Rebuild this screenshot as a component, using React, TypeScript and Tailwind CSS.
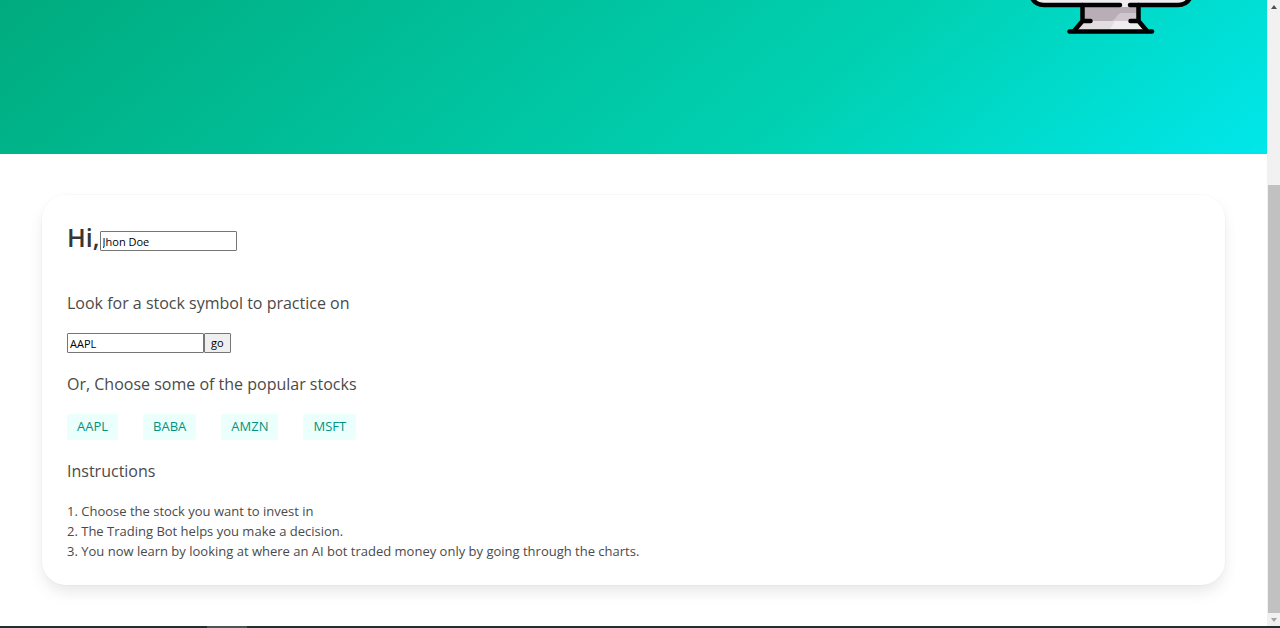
import { useState } from "react";

const stocks = ["AAPL", "BABA", "AMZN", "MSFT"];

const steps = [
  "1. Choose the stock you want to invest in",
  "2. The Trading Bot helps you make a decision.",
  "3. You now learn by looking at where an AI bot traded money only by going through the charts.",
];

function Monitor() {
  return (
    <svg className="h-[38px] w-[170px]" viewBox="0 0 170 38" fill="none" aria-hidden="true">
      <path d="M6 0c2 3 6 5 11 5h136c5 0 9-2 11-5Z" fill="#efedef" />
      <path d="M56 5h55v15l10 12H45l11-12Z" fill="#efedef" />
      <path d="M56 7h55v14H56Z" fill="#b9aeb8" />
      <path d="M56 21h33l-5 8H50Z" fill="#e2dde1" />
      <path d="M96 13h15v8H86c4-1 5-8 10-8Z" fill="#cfc6ce" />
      <g stroke="#000" strokeWidth="4.5" strokeLinecap="round" strokeLinejoin="round">
        <path d="M6-2c2 4 6 7 12 7h76" />
        <path d="M104 5h48c6 0 10-3 12-7" />
        <path d="M56.500 5v16h8M56.500 21L48 31" />
        <path d="M112.500 5v16h-8M112.500 21L121 31" />
        <path d="M43.500 31.500H126" />
      </g>
    </svg>
  );
}

function Scrollbar() {
  return (
    <div className="flex w-[13px] shrink-0 flex-col items-center bg-[#f1f1f1] pl-px" aria-hidden="true">
      <svg className="h-3.5 w-3 shrink-0" viewBox="0 0 12 14">
        <path d="M3 9l3-4 3 4Z" fill="#505050" />
      </svg>
      <div className="w-full grow-[171]" />
      <div className="w-full grow-[428] bg-[#c1c1c1]" />
      <svg className="h-[13px] w-3 shrink-0" viewBox="0 0 12 13">
        <path d="M3 5l3 4 3-4Z" fill="#a3a3a3" />
      </svg>
    </div>
  );
}

export default function App() {
  const [name, setName] = useState("Jhon Doe");
  const [symbol, setSymbol] = useState("AAPL");

  return (
    <div className="flex min-h-screen flex-col bg-white font-['Open_Sans','Noto_Sans',sans-serif] text-[#4a4a4a]">
      <div className="flex grow">
        <div className="min-w-0 grow">
          <header className="flex h-[154px] justify-end bg-linear-[141deg,#009e6c_0%,#00d1b2_71%,#00e7eb_100%] bg-[length:100%_426px] bg-bottom pr-[71px]">
            <Monitor />
          </header>
          <main className="px-[42px] py-[41px]">
            <section className="rounded-3xl px-[25px] py-6 shadow-[0_8px_16px_-2px_rgba(10,10,10,0.1),0_0_0_1px_rgba(10,10,10,0.02)]">
              <div className="flex items-end">
                <label htmlFor="name" className="text-[25px] leading-9 font-semibold text-[#363636]">
                  Hi,
                </label>
                <input
                  id="name"
                  value={name}
                  onChange={(e) => setName(e.target.value)}
                  className="mb-1 h-5 w-[137px] rounded-[1px] border border-[#767676] bg-white px-0.5 text-[11px] text-black"
                />
              </div>
              <label htmlFor="symbol" className="mt-9 block text-base leading-6">
                Look for a stock symbol to practice on
              </label>
              <form className="mt-[18px] flex" onSubmit={(e) => e.preventDefault()}>
                <input
                  id="symbol"
                  value={symbol}
                  onChange={(e) => setSymbol(e.target.value)}
                  className="h-5 w-[137px] rounded-[1px] border border-[#767676] bg-white px-0.5 text-[11px] text-black"
                />
                <button className="h-5 rounded-[1px] border border-[#767676] bg-[#efefef] px-1.5 text-[11px] leading-4 text-black">
                  go
                </button>
              </form>
              <h2 className="mt-[19px] text-base leading-6">Or, Choose some of the popular stocks</h2>
              <div className="mt-[18px] flex gap-[25px]">
                {stocks.map((stock) => (
                  <button
                    key={stock}
                    onClick={() => setSymbol(stock)}
                    className="h-[26px] rounded-xs bg-[#ebfffc] px-2.5 text-[13px] text-[#00947e]"
                  >
                    {stock}
                  </button>
                ))}
              </div>
              <h2 className="mt-[19px] text-base leading-6">Instructions</h2>
              <div className="mt-[18px] text-[13px] leading-5">
                {steps.map((step) => (
                  <p key={step}>{step}</p>
                ))}
              </div>
            </section>
          </main>
        </div>
        <Scrollbar />
      </div>
      <div className="flex h-0.5 bg-[#20302f] pl-[207px]" aria-hidden="true">
        <div className="w-10 bg-[#4a5554]" />
      </div>
    </div>
  );
}
